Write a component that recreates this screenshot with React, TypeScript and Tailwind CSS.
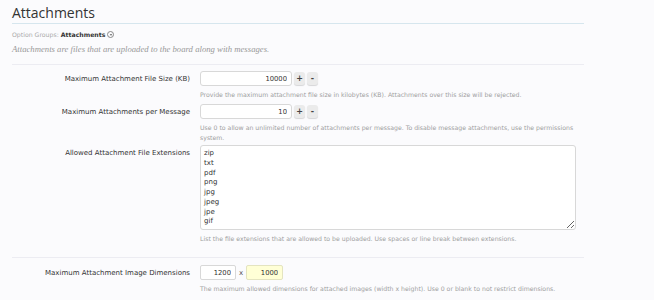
import React from "react";

const labelFont = { fontFamily: '"DejaVu Sans", Verdana, sans-serif' };

function Spinner({ value }: { value: string }) {
  return (
    <div className="flex items-center gap-[2px]">
      <input
        readOnly
        value={value}
        className="h-[15px] w-[92px] rounded-[3px] border border-[#d8d8d8] bg-white px-[4px] text-right text-[6.8px] text-[#333] outline-none"
      />
      <button className="flex h-[13px] w-[11px] items-center justify-center rounded-[3px] bg-[#ebebeb] text-[8px] font-bold text-[#444] shadow-[0_1px_1px_rgba(0,0,0,0.15)]">
        +
      </button>
      <button className="flex h-[13px] w-[11px] items-center justify-center rounded-[3px] bg-[#ebebeb] text-[8px] font-bold text-[#444] shadow-[0_1px_1px_rgba(0,0,0,0.15)]">
        -
      </button>
    </div>
  );
}

function Row({
  label,
  children,
  hint,
  className = "",
}: {
  label: string;
  children: React.ReactNode;
  hint: string;
  className?: string;
}) {
  return (
    <div className={`grid grid-cols-[178px_1fr] gap-x-[10px] ${className}`}>
      <div className="pt-[3px] text-right text-[7px] text-[#333]">{label}</div>
      <div>
        {children}
        <p className="mt-[4px] w-[378px] text-[6.2px] leading-[10px] text-[#a0a0a0]">{hint}</p>
      </div>
    </div>
  );
}

const extensions = ["zip", "txt", "pdf", "png", "jpg", "jpeg", "jpe", "gif"];

export default function App() {
  return (
    <div className="h-[300px] w-[654px] overflow-hidden bg-[#fbfbfd]" style={labelFont}>
      <div className="ml-[12px] w-[572px]">
        <h1
          className="border-b border-[#d6e6ee] pt-[3px] pb-[1px] text-[14px] leading-[19px] text-[#333]"
          style={{ fontFamily: '"Open Sans", sans-serif' }}
        >
          Attachments
        </h1>
        <div className="mt-[6px] flex items-center gap-[2px] text-[6.2px] text-[#aaa]">
          <span>Option Groups:</span>
          <span className="font-bold text-[#333]">Attachments</span>
          <span className="flex h-[7px] w-[7px] items-center justify-center rounded-full border border-[#888]">
            <svg viewBox="0 0 6 6" className="h-[4px] w-[4px]">
              <path d="M1 2l2 2 2-2z" fill="#555" />
            </svg>
          </span>
        </div>
        <p
          className="mt-[4px] text-[8.7px] italic text-[#999]"
          style={{ fontFamily: '"Liberation Serif", serif' }}
        >
          Attachments are files that are uploaded to the board along with messages.
        </p>
        <div className="mt-[8px] border-t border-[#ececf2]" />

        <Row
          className="mt-[6px]"
          label="Maximum Attachment File Size (KB)"
          hint="Provide the maximum attachment file size in kilobytes (KB). Attachments over this size will be rejected."
        >
          <Spinner value="10000" />
        </Row>

        <Row
          className="mt-[4px]"
          label="Maximum Attachments per Message"
          hint="Use 0 to allow an unlimited number of attachments per message. To disable message attachments, use the permissions system."
        >
          <Spinner value="10" />
        </Row>

        <Row
          className="mt-[2px]"
          label="Allowed Attachment File Extensions"
          hint="List the file extensions that are allowed to be uploaded. Use spaces or line break between extensions."
        >
          <textarea
            readOnly
            value={extensions.join("\n")}
            className="block h-[85px] w-[376px] resize-y rounded-[3px] border border-[#d8d8d8] bg-white px-[3px] pt-[3px] text-[7px] leading-[9.7px] text-[#333] outline-none"
          />
        </Row>

        <div className="mt-[13px] border-t border-[#ececf2]" />

        <Row
          className="mt-[7px]"
          label="Maximum Attachment Image Dimensions"
          hint="The maximum allowed dimensions for attached images (width x height). Use 0 or blank to not restrict dimensions."
        >
          <div className="flex items-center gap-[3px]">
            <input
              readOnly
              value="1200"
              className="h-[15px] w-[36px] rounded-[2px] border border-[#d8d8d8] bg-white px-[4px] text-right text-[6.8px] text-[#333] outline-none"
            />
            <span className="text-[7px] text-[#555]">x</span>
            <input
              readOnly
              value="1000"
              className="h-[15px] w-[37px] rounded-[2px] border border-[#e4e4c0] bg-[#ffffd6] px-[4px] text-right text-[6.8px] text-[#333] outline-none"
            />
          </div>
        </Row>
      </div>
    </div>
  );
}
